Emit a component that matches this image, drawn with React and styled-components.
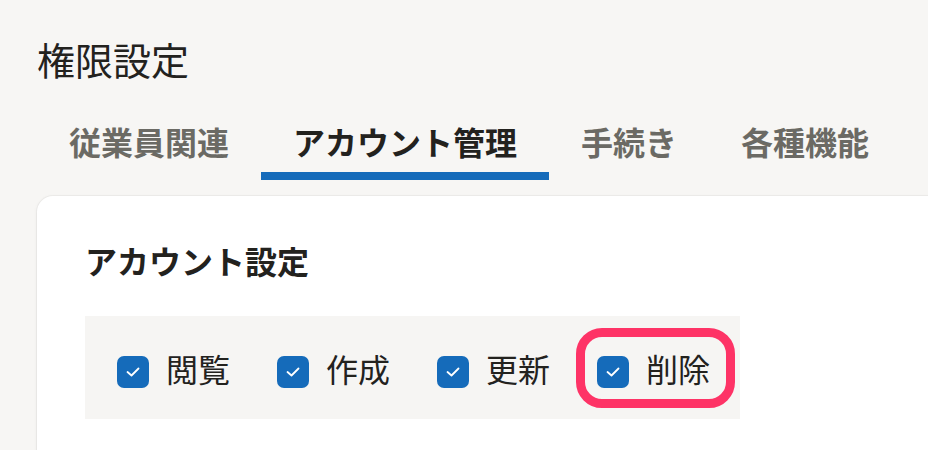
import React from 'react'
import styled, { createGlobalStyle } from 'styled-components'

const GlobalStyle = createGlobalStyle`
  html, body {
    margin: 0;
    padding: 0;
    background: #f7f6f4;
  }
  body {
    font-family: "Noto Sans CJK JP", "Noto Sans", sans-serif;
    color: #23221e;
  }
`

const Page = styled.div`
  width: 100%;
  height: 450px;
  overflow: hidden;
  padding: 30px 0 0 37px;
  box-sizing: border-box;
`

const Title = styled.h1`
  margin: 0;
  font-size: 38px;
  line-height: 57px;
  font-weight: 400;
  color: #23221e;
`

const Tabs = styled.div`
  display: flex;
  margin-top: 30px;
`

const Tab = styled.div`
  padding: 0 32px 7px;
  font-size: 32px;
  line-height: 48px;
  font-weight: 700;
  white-space: nowrap;
  color: ${p => (p.$active ? '#23221e' : '#6b6a64')};
  border-bottom: 8px solid ${p => (p.$active ? '#156bba' : 'transparent')};
`

const Card = styled.div`
  width: 1000px;
  margin-top: 16px;
  background: #fff;
  border-radius: 16px;
  padding: 40px 48px 60px;
  box-shadow: 0 0 0 1px rgba(0, 0, 0, 0.035), 0 1px 4px rgba(0, 0, 0, 0.06);
`

const Heading = styled.h2`
  margin: 0;
  font-size: 32px;
  line-height: 48px;
  font-weight: 700;
  color: #23221e;
`

const PermRow = styled.div`
  margin-top: 32px;
  width: 655px;
  height: 103px;
  box-sizing: border-box;
  background: #f6f5f3;
  padding: 38px 32px 0;
  display: flex;
  align-items: flex-start;
  gap: 47px;
`

const Item = styled.label`
  position: relative;
  flex-shrink: 0;
  display: flex;
  align-items: center;
  gap: 17px;
  height: 36px;
`

const Box = styled.span`
  width: 32px;
  height: 32px;
  border-radius: 7px;
  background: #156bba;
  display: flex;
  align-items: center;
  justify-content: center;
`

const Label = styled.span`
  font-size: 32px;
  line-height: 36px;
  font-weight: 400;
  white-space: nowrap;
  color: #23221e;
  padding-bottom: 9px;
`

const Highlight = styled.span`
  position: absolute;
  left: -21px;
  right: -25px;
  top: -26px;
  bottom: -18px;
  border: 9px solid #fe3366;
  border-radius: 26px;
  pointer-events: none;
`

const Check = () => (
  <svg width="14" height="10" viewBox="0 0 14 10" fill="none">
    <polyline points="1.5,5 5.5,8.5 12.5,1.5" stroke="#fff" strokeWidth="1.8" strokeLinecap="round" strokeLinejoin="round" />
  </svg>
)

const tabs = ['従業員関連', 'アカウント管理', '手続き', '各種機能']
const perms = ['閲覧', '作成', '更新', '削除']

export default function App() {
  return (
    <>
      <GlobalStyle />
      <Page>
        <Title>権限設定</Title>
        <Tabs>
          {tabs.map((t, i) => (
            <Tab key={t} $active={i === 1}>{t}</Tab>
          ))}
        </Tabs>
        <Card>
          <Heading>アカウント設定</Heading>
          <PermRow>
            {perms.map((p, i) => (
              <Item key={p}>
                <Box><Check /></Box>
                <Label>{p}</Label>
                {i === 3 && <Highlight />}
              </Item>
            ))}
          </PermRow>
        </Card>
      </Page>
    </>
  )
}
